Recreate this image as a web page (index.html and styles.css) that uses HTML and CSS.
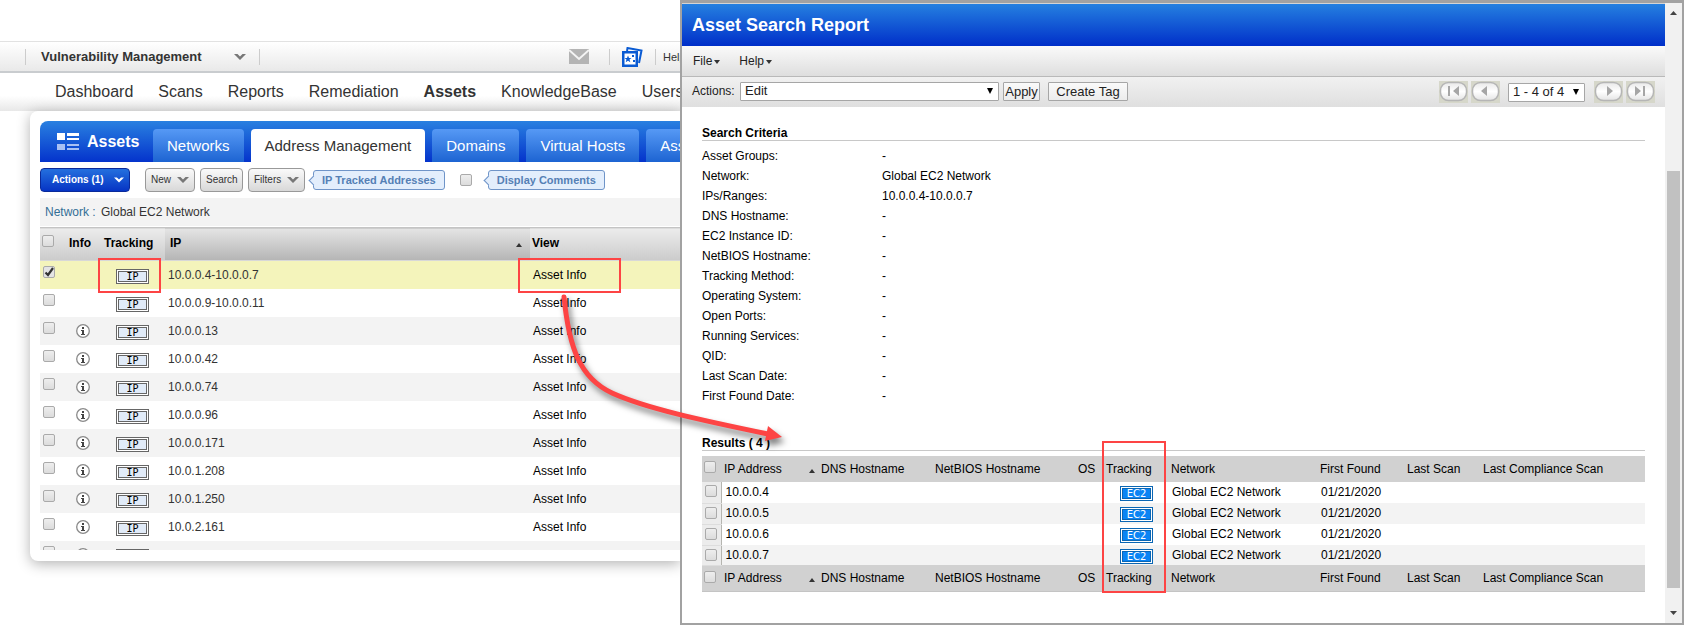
FILE: index.html
```html
<!DOCTYPE html>
<html lang="en">
<head>
<meta charset="utf-8">
<title>Asset Search Report</title>
<link rel="stylesheet" href="styles.css">
</head>
<body>
<svg class="defs" aria-hidden="true">
  <symbol id="chev" viewBox="0 0 12 8"><path d="M0 1h3.500L6 3.500 8.500 1H12L6 7z" fill="currentColor"/></symbol>
  <symbol id="info" viewBox="0 0 14 14"><circle cx="7" cy="7" r="6.3" fill="#fff" stroke="#8a8a8a" stroke-width="1.3"/><path d="M6 3h2v2H6zM5 6h3v4h1v1H5v-1h1V7H5z" fill="#444"/></symbol>
  <symbol id="sort" viewBox="0 0 6 4"><path d="M0 4L3 0l3 4z" fill="#333"/></symbol>
</svg>
<div class="desktop">
  <section class="app">
    <header class="topbar">
      <button class="module">Vulnerability Management <svg class="chev"><use href="#chev"/></svg></button>
      <div class="tools">
        <svg class="mail" viewBox="0 0 20 15"><path d="M0 0h20v15H0z" fill="#b4b4b4"/><path d="M0 1l10 9L20 1" fill="none" stroke="#f4f4f4" stroke-width="2"/></svg>
        <span class="cards"><svg viewBox="0 0 21 20"><path d="M5 4l.5-3L19.500 3.500 17 16" fill="none" stroke="#0a5bd3" stroke-width="2"/><path d="M1.250 5.250h13.500v13.500H1.250z" fill="#fff" stroke="#0a5bd3" stroke-width="2.500"/><path d="M6 8.500l1 2.500h2.500l-2 1.600.8 2.600L6 13.700l-2.300 1.500.8-2.600-2-1.600H5z" fill="#0a5bd3"/><path d="M10 8h2v2h-2zM11 13h2v2h-2z" fill="#0a5bd3"/></svg></span>
        <a class="help" href="#">Help</a>
      </div>
    </header>
    <nav class="nav"><a href="#">Dashboard</a><a href="#">Scans</a><a href="#">Reports</a><a href="#">Remediation</a><a href="#" class="on">Assets</a><a href="#">KnowledgeBase</a><a href="#">Users</a></nav>
    <main class="card">
      <div class="tabs">
        <h1><svg viewBox="0 0 22 17"><path d="M0 0h8v7H0zM10 0h12v3H10zM10 5h12v2H10z" fill="#fff"/><path d="M0 11h8v6H0zM10 11h12v2H10zM10 15h12v2H10z" fill="#a9c0f3"/></svg>Assets</h1>
        <a href="#">Networks</a><a href="#" class="on">Address Management</a><a href="#">Domains</a><a href="#">Virtual Hosts</a><a href="#">Asset Search</a>
      </div>
      <div class="toolbar">
        <button class="btn primary">Actions (1) <svg class="chev"><use href="#chev"/></svg></button>
        <button class="btn new">New <svg class="chev"><use href="#chev"/></svg></button>
        <button class="btn">Search</button>
        <button class="btn filters">Filters <svg class="chev"><use href="#chev"/></svg></button>
        <span class="tag">IP Tracked Addresses</span>
        <input type="checkbox" class="box" id="cmt"><label class="tag" for="cmt">Display Comments</label>
      </div>
      <p class="crumb"><a href="#">Network :</a> Global EC2 Network</p>
      <div class="clip">
      <table class="assets">
        <thead><tr><th class="c-box"><input type="checkbox" class="box" aria-label="Select all"></th><th class="c-info">Info</th><th class="c-track">Tracking</th><th class="c-ip"><div>IP <svg class="sort"><use href="#sort"/></svg></div></th><th class="c-view">View</th></tr></thead>
        <tbody>
          <tr class="sel"><td><input type="checkbox" class="box" checked aria-label="Select 10.0.0.4-10.0.0.7"></td><td></td><td><span class="ip">IP</span></td><td>10.0.0.4-10.0.0.7</td><td><a href="#">Asset Info</a></td></tr>
          <tr><td><input type="checkbox" class="box" aria-label="Select 10.0.0.9-10.0.0.11"></td><td></td><td><span class="ip">IP</span></td><td>10.0.0.9-10.0.0.11</td><td><a href="#">Asset Info</a></td></tr>
          <tr><td><input type="checkbox" class="box" aria-label="Select 10.0.0.13"></td><td><svg class="info"><use href="#info"/></svg></td><td><span class="ip">IP</span></td><td>10.0.0.13</td><td><a href="#">Asset Info</a></td></tr>
          <tr><td><input type="checkbox" class="box" aria-label="Select 10.0.0.42"></td><td><svg class="info"><use href="#info"/></svg></td><td><span class="ip">IP</span></td><td>10.0.0.42</td><td><a href="#">Asset Info</a></td></tr>
          <tr><td><input type="checkbox" class="box" aria-label="Select 10.0.0.74"></td><td><svg class="info"><use href="#info"/></svg></td><td><span class="ip">IP</span></td><td>10.0.0.74</td><td><a href="#">Asset Info</a></td></tr>
          <tr><td><input type="checkbox" class="box" aria-label="Select 10.0.0.96"></td><td><svg class="info"><use href="#info"/></svg></td><td><span class="ip">IP</span></td><td>10.0.0.96</td><td><a href="#">Asset Info</a></td></tr>
          <tr><td><input type="checkbox" class="box" aria-label="Select 10.0.0.171"></td><td><svg class="info"><use href="#info"/></svg></td><td><span class="ip">IP</span></td><td>10.0.0.171</td><td><a href="#">Asset Info</a></td></tr>
          <tr><td><input type="checkbox" class="box" aria-label="Select 10.0.1.208"></td><td><svg class="info"><use href="#info"/></svg></td><td><span class="ip">IP</span></td><td>10.0.1.208</td><td><a href="#">Asset Info</a></td></tr>
          <tr><td><input type="checkbox" class="box" aria-label="Select 10.0.1.250"></td><td><svg class="info"><use href="#info"/></svg></td><td><span class="ip">IP</span></td><td>10.0.1.250</td><td><a href="#">Asset Info</a></td></tr>
          <tr><td><input type="checkbox" class="box" aria-label="Select 10.0.2.161"></td><td><svg class="info"><use href="#info"/></svg></td><td><span class="ip">IP</span></td><td>10.0.2.161</td><td><a href="#">Asset Info</a></td></tr>
          <tr><td><input type="checkbox" class="box" aria-label="Select next asset"></td><td><svg class="info"><use href="#info"/></svg></td><td><span class="ip"></span></td><td></td><td></td></tr>
        </tbody>
      </table>
      </div>
    </main>
  </section>

  <section class="report">
    <div class="pane">
      <h2>Asset Search Report</h2>
      <div class="menubar"><button>File<svg class="caret" viewBox="0 0 6 4"><path d="M0 0h6L3 4z"/></svg></button><button>Help<svg class="caret" viewBox="0 0 6 4"><path d="M0 0h6L3 4z"/></svg></button></div>
      <div class="actions">
        <label for="act">Actions:</label>
        <span class="pick wide"><select id="act"><option>Edit</option></select></span>
        <button class="plain apply">Apply</button>
        <button class="plain create">Create Tag</button>
        <div class="pager">
          <button aria-label="First page"><svg viewBox="0 0 29 22"><use href="#pill"/><path d="M9 5h2v10H9zM20 5v10l-6-5z" fill="#a6a6a6"/></svg></button>
          <button aria-label="Previous page"><svg viewBox="0 0 29 22"><use href="#pill"/><path d="M16 5v10l-6-5z" fill="#a6a6a6"/></svg></button>
          <span class="pick range"><select aria-label="Rows shown"><option>1 - 4 of 4</option></select></span>
          <button aria-label="Next page"><svg viewBox="0 0 29 22"><use href="#pill"/><path d="M13 5v10l6-5z" fill="#a6a6a6"/></svg></button>
          <button aria-label="Last page"><svg viewBox="0 0 29 22"><use href="#pill"/><path d="M9 5v10l6-5zM17 5h2v10h-2z" fill="#a6a6a6"/></svg></button>
        </div>
      </div>
      <div class="body">
        <h3>Search Criteria</h3>
        <dl>
          <dt>Asset Groups:</dt><dd>-</dd>
          <dt>Network:</dt><dd>Global EC2 Network</dd>
          <dt>IPs/Ranges:</dt><dd>10.0.0.4-10.0.0.7</dd>
          <dt>DNS Hostname:</dt><dd>-</dd>
          <dt>EC2 Instance ID:</dt><dd>-</dd>
          <dt>NetBIOS Hostname:</dt><dd>-</dd>
          <dt>Tracking Method:</dt><dd>-</dd>
          <dt>Operating System:</dt><dd>-</dd>
          <dt>Open Ports:</dt><dd>-</dd>
          <dt>Running Services:</dt><dd>-</dd>
          <dt>QID:</dt><dd>-</dd>
          <dt>Last Scan Date:</dt><dd>-</dd>
          <dt>First Found Date:</dt><dd>-</dd>
        </dl>
        <h3>Results ( 4 )</h3>
        <table class="results">
          <colgroup><col class="w-box"><col class="w-ip"><col class="w-dns"><col class="w-nb"><col class="w-os"><col class="w-tr"><col class="w-net"><col class="w-ff"><col class="w-ls"><col></colgroup>
          <thead><tr><th><input type="checkbox" class="box" aria-label="Select all results"></th><th><div>IP Address <svg class="sort"><use href="#sort"/></svg></div></th><th>DNS Hostname</th><th>NetBIOS Hostname</th><th>OS</th><th>Tracking</th><th>Network</th><th>First Found</th><th>Last Scan</th><th>Last Compliance Scan</th></tr></thead>
          <tbody>
            <tr><td><input type="checkbox" class="box" aria-label="Select 10.0.0.4"></td><td>10.0.0.4</td><td></td><td></td><td></td><td><span class="ec2">EC2</span></td><td>Global EC2 Network</td><td>01/21/2020</td><td></td><td></td></tr>
            <tr><td><input type="checkbox" class="box" aria-label="Select 10.0.0.5"></td><td>10.0.0.5</td><td></td><td></td><td></td><td><span class="ec2">EC2</span></td><td>Global EC2 Network</td><td>01/21/2020</td><td></td><td></td></tr>
            <tr><td><input type="checkbox" class="box" aria-label="Select 10.0.0.6"></td><td>10.0.0.6</td><td></td><td></td><td></td><td><span class="ec2">EC2</span></td><td>Global EC2 Network</td><td>01/21/2020</td><td></td><td></td></tr>
            <tr><td><input type="checkbox" class="box" aria-label="Select 10.0.0.7"></td><td>10.0.0.7</td><td></td><td></td><td></td><td><span class="ec2">EC2</span></td><td>Global EC2 Network</td><td>01/21/2020</td><td></td><td></td></tr>
          </tbody>
          <tfoot><tr><th><input type="checkbox" class="box" aria-label="Select all results"></th><th><div>IP Address <svg class="sort"><use href="#sort"/></svg></div></th><th>DNS Hostname</th><th>NetBIOS Hostname</th><th>OS</th><th>Tracking</th><th>Network</th><th>First Found</th><th>Last Scan</th><th>Last Compliance Scan</th></tr></tfoot>
        </table>
      </div>
    </div>
    <div class="scroll" aria-hidden="true"><svg viewBox="0 0 7 4"><path d="M0 4L3.500 0 7 4z"/></svg><i></i><svg viewBox="0 0 7 4"><path d="M0 0h7L3.500 4z"/></svg></div>
  </section>

  <svg class="marks" aria-hidden="true">
    <symbol id="pill" viewBox="0 0 29 22"><linearGradient id="pg" x2="0" y2="1"><stop offset="0" stop-color="#e9e9e9"/><stop offset=".5" stop-color="#fff"/><stop offset="1" stop-color="#e4e4e4"/></linearGradient><path d="M0 0h29v22H0z" fill="#d6d7ca"/><rect x="1.500" y="1.500" width="26" height="18" rx="8" fill="url(#pg)" stroke="#b5b5b5" stroke-width="1.500"/></symbol>
    <g fill="none" stroke="#fd4444" stroke-width="2"><path d="M99 259h61v33H99zM519 259h101v33H519zM1103 442h62v150h-62z"/></g>
    <g class="arrow"><path d="M564 297C569 348 580 378 612 393C645 408 700 420 768 434" fill="none" stroke="#fd4444" stroke-width="5" stroke-linecap="round"/><path d="M768 426l14 11-17 4z" fill="#fd4444"/></g>
  </svg>
</div>
</body>
</html>
```
FILE: styles.css
```css
* { box-sizing: border-box; }
body { margin: 0; font: 12px/16px "Liberation Sans", Arial, sans-serif; color: #000; background: #fff; }
a { color: inherit; text-decoration: none; }
button, select { font: inherit; color: inherit; }
h1, h2, h3, p, dl, dd { margin: 0; }
svg { display: block; }
.defs { position: absolute; width: 0; height: 0; }
.desktop { position: relative; display: flex; min-height: 100vh; }
.marks { position: absolute; top: 0; left: 0; width: 100%; height: 100%; pointer-events: none; }
.arrow { filter: drop-shadow(3px 5px 3px rgba(0, 0, 0, .5)); }

/* asset list behind the report */
.app { flex: 0 0 680px; min-width: 0; overflow: hidden; padding-top: 41px; white-space: nowrap; }
.topbar { display: flex; align-items: center; justify-content: space-between; height: 32px; padding-left: 25px; border-top: 1px solid #e2e2e2; border-bottom: 2px solid #c9cccf; background: linear-gradient(#fff, #e9e9e9); }
.module { display: flex; align-items: center; justify-content: space-between; width: 235px; height: 16px; padding: 0 13px 0 15px; border: 0; border-left: 1px solid #ccc; border-right: 1px solid #ccc; background: none; font-size: 13px; font-weight: bold; color: #333; }
.chev { width: 12px; height: 8px; flex: none; color: #777; }
.tools { display: flex; align-items: center; }
.mail { width: 20px; height: 15px; margin-right: 20px; }
.cards { padding: 0 12px; border-left: 1px solid #ccc; border-right: 1px solid #ccc; height: 16px; display: flex; align-items: center; }
.cards svg { width: 21px; height: 20px; }
.help { width: 24px; padding-left: 7px; font-size: 11px; color: #333; overflow: hidden; }
.nav { display: flex; gap: 25px; height: 38px; padding: 9px 0 0 55px; font-size: 16px; line-height: 20px; color: #333; background: linear-gradient(#fff 60%, #e8e8e8); }
.nav .on { font-weight: bold; }
.card { margin-left: 30px; padding: 10px 0 11px 10px; border-radius: 8px 0 0 8px; background: #fff; box-shadow: 0 3px 14px rgba(0, 0, 0, .3); }
.tabs { display: flex; align-items: flex-end; height: 41px; overflow: hidden; border-radius: 8px 0 0 0; background: linear-gradient(#2980e0, #0433cc); color: #fff; font-size: 15px; line-height: 33px; }
.tabs h1 { flex: none; display: flex; align-items: center; gap: 8px; width: 113px; padding-left: 17px; font-size: 16px; line-height: 41px; }
.tabs h1 svg { width: 22px; height: 17px; }
.tabs a { flex: none; margin-right: 7px; padding: 0 14px; border-radius: 4px 4px 0 0; background: linear-gradient(#5699f5, #1d64d2); }
.tabs .on { background: #fff; color: #333; }
.toolbar { display: flex; align-items: center; height: 36px; }
.btn { display: flex; align-items: center; justify-content: space-between; width: 43px; height: 24px; margin-right: 5px; padding: 0 5px; border: 1px solid #999; border-radius: 4px; background: linear-gradient(#fafafa, #d8d8d8); font-size: 10px; color: #333; }
.btn.new { width: 50px; }
.btn.filters { width: 57px; }
.btn.primary { width: 90px; margin-right: 15px; padding: 0 5px 0 11px; border-color: #0a2a9a; background: linear-gradient(#2470de, #0634c4); color: #fff; font-weight: bold; }
.primary .chev { width: 10px; color: #fff; }
.tag { position: relative; height: 20px; margin: 0 15px 0 3px; padding: 0 8px; border: 1px solid #6f94c8; border-radius: 3px; background: #e3eefc; color: #5580b5; font-size: 11px; font-weight: bold; line-height: 18px; }
.tag::before { content: ""; position: absolute; left: -4px; top: 6px; width: 6px; height: 6px; border: 1px solid #6f94c8; border-width: 0 0 1px 1px; background: #e3eefc; transform: rotate(45deg); }
.toolbar .box + .tag { margin-left: 16px; }
.box { appearance: none; display: block; width: 12px; height: 12px; margin: 0; border: 1px solid #aaa; border-radius: 2px; background: linear-gradient(#eee, #dcdcdc); }
.box:checked { background: url('data:image/svg+xml,<svg xmlns="http://www.w3.org/2000/svg" viewBox="0 0 10 10"><path d="M1.500 5.500L4 8l5-7" fill="none" stroke="%23333" stroke-width="2.200"/></svg>') #e4e4e4; }
.crumb { height: 28px; margin-bottom: 1px; padding-left: 5px; background: #f3f3f3; line-height: 28px; color: #333; }
.crumb a { margin-right: 2px; color: #336f96; }
.clip { height: 323px; overflow: hidden; }
table { width: 100%; border-collapse: collapse; table-layout: fixed; }
th, td { padding: 0; text-align: left; vertical-align: top; }
.assets th { height: 33px; padding-top: 7px; border-top: 1px solid #c4c4c4; border-bottom: 1px solid #d8d8d8; background: linear-gradient(#ececec, #cbcbcb); }
.assets th.c-box { width: 28px; padding: 7px 0 0 2px; }
.assets th.c-info { width: 36px; padding-left: 1px; }
.c-track { width: 61px; }
.assets th.c-ip { width: 365px; padding-left: 5px; padding-right: 8px; background: linear-gradient(#e4e4e4, #b4b4b4); }
.assets th.c-view { padding-left: 2px; }
th div { display: flex; align-items: center; justify-content: space-between; }
.sort { width: 6px; height: 4px; margin-top: 3px; }
.assets td { height: 28px; padding-top: 6px; color: #333; }
.assets td:nth-child(1) { padding: 5px 0 0 3px; }
.assets td:nth-child(2) { padding: 7px 0 0 8px; }
.assets td:nth-child(3) { padding: 8px 0 0 12px; }
.assets td:nth-child(4) { padding-left: 3px; }
.assets td:nth-child(5) { padding-left: 3px; color: #000; }
.assets tr:nth-child(odd) td { background: #f3f3f3; }
.assets tr.sel td { background: #f4f4bb; }
.info { width: 14px; height: 14px; }
.ip, .ec2 { display: block; width: 33px; height: 15px; border: 1px solid #666; box-shadow: inset 0 0 0 1px #fff, inset 0 0 0 2px #666; background: #e1ebf8; color: #000; font: 10px/13px "DejaVu Sans Mono", monospace; text-align: center; }
.ec2 { border-color: #0a66b4; box-shadow: inset 0 0 0 1px #fff, inset 0 0 0 2px #0a66b4; background: #0a84f4; color: #fff; font-family: "DejaVu Sans", sans-serif; }

/* report window */
.report { flex: 1; min-width: 0; display: flex; border: 2px solid #a2a2a2; border-top-width: 3px; }
.pane { flex: 1; min-width: 0; border-top: 1px solid #d4d4d4; }
.pane h2 { height: 42px; padding-left: 10px; background: linear-gradient(#2580e0, #002fc9); color: #fff; font-size: 18px; line-height: 42px; }
.menubar { display: flex; gap: 19px; height: 31px; padding: 0 11px; border-bottom: 1px solid #b9b9b9; background: linear-gradient(#fafafa, #dedede); }
.menubar button { display: flex; align-items: center; gap: 2px; padding: 0; border: 0; background: none; color: #222; }
.caret { width: 6px; height: 4px; margin-top: 2px; fill: #333; }
.actions { display: flex; align-items: center; height: 30px; padding: 0 10px 2px; background: linear-gradient(#f1f1f1, #dfdfdf); color: #222; }
.actions label { width: 48px; }
.pick { position: relative; display: flex; height: 19px; }
.pick select { appearance: none; width: 100%; padding: 0 4px; border: 1px solid #a6a6a6; border-radius: 1px; background: #fff; color: #222; font-size: 13px; }
.pick::after { content: ""; position: absolute; right: 6px; top: 6px; border: 3px solid transparent; border-top: 6px solid #000; border-bottom: 0; }
.wide { width: 259px; margin-right: 4px; }
.plain { height: 19px; padding: 0; border: 1px solid #a6a6a6; border-radius: 1px; background: linear-gradient(#fafafa, #ececec); font-size: 13px; line-height: 17px; }
.apply { width: 37px; margin-right: 8px; }
.create { width: 80px; }
.pager { display: flex; align-items: center; gap: 3px; margin-left: auto; padding-top: 2px; }
.pager button { width: 29px; height: 22px; padding: 0; border: 0; background: none; }
.range { width: 77px; margin: 0 6px 0 5px; }
.body { padding: 18px 20px; }
.body h3 { height: 16px; border-bottom: 1px solid #c8c8c8; font-size: 12px; }
dl { display: grid; grid-template-columns: 180px 1fr; grid-auto-rows: 20px; line-height: 20px; padding: 5px 0 29px; }
.results { margin-top: 5px; }
.results th { height: 26px; padding-top: 5px; background: #d1d1d1; font-weight: normal; }
.results th:first-child { padding-left: 2px; }
.results td { height: 21px; padding: 2px 0 0 1px; }
.results tr:last-child td { height: 20px; }
.results tr:nth-child(even) td { background: #f3f3f3; }
.results tbody td:first-child { padding: 3px 0 0 3px; border-bottom: 1px solid #ddd; background: #ececec; }
.results tbody td:nth-child(2) { padding-left: 4px; border-left: 1px solid #b5b5b0; }
.results tbody td:nth-child(6) { padding: 4px 0 0 14px; }
.results th div { padding: 0 6px 0 3px; }
.results tfoot th { border-bottom: 1px solid #c4c4c4; }
.w-box { width: 19px; }
.w-ip { width: 100px; }
.w-dns { width: 114px; }
.w-nb { width: 143px; }
.w-os { width: 28px; }
.w-tr { width: 65px; }
.w-net { width: 149px; }
.w-ff { width: 87px; }
.w-ls { width: 76px; }
.scroll { display: flex; flex-direction: column; align-items: center; justify-content: space-between; width: 17px; padding: 8px 0; background: #f1f1f1; }
.scroll svg { width: 7px; height: 4px; fill: #444; }
.scroll i { width: 13px; height: 69%; margin-top: 156px; margin-bottom: auto; background: #c1c1c1; }
```
